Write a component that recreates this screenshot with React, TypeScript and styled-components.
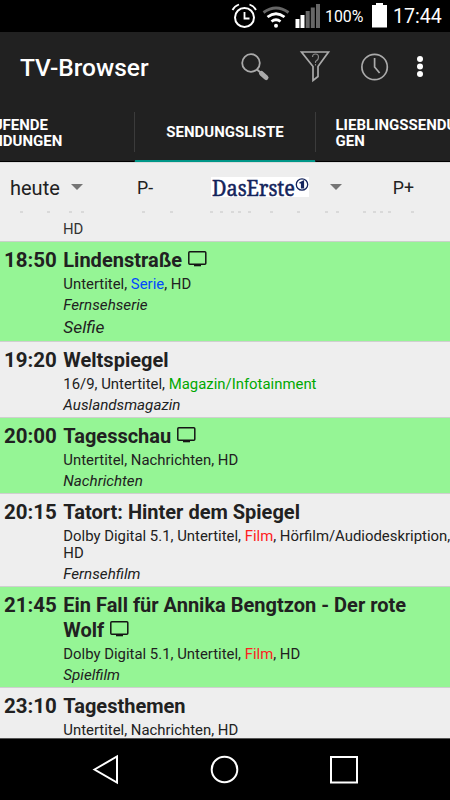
import React from "react";
import styled, { createGlobalStyle } from "styled-components";

const Global = createGlobalStyle`
  * { box-sizing: border-box; }
  body { margin: 0; background: #000; font-family: Roboto, sans-serif; }
`;
const Screen = styled.div`
  width: 450px; height: 800px; overflow: hidden; background: #000;
  display: flex; flex-direction: column;
`;
const Status = styled.header`
  height: 32px; flex: none; display: flex; align-items: center; color: #fff; background: #000;
`;
const StatusIcons = styled.svg`width: 98px; height: 32px; margin-left: 225px; flex: none;`;
const Percent = styled.span`width: 46px; margin-left: 2px; padding-top: 2px; font-size: 15.9px; line-height: 32px; white-space: nowrap;`;
const Battery = styled.svg`width: 18px; height: 32px; flex: none;`;
const Time = styled.span`margin-left: 4px; font-size: 19.6px; line-height: 33px; padding-top: 1px; white-space: nowrap;`;
const AppBar = styled.div`
  height: 73px; flex: none; background: #212121; display: flex; align-items: center; padding: 0 8px 3px 20px;
`;
const AppName = styled.h1`margin: 0; padding-top: 1px; flex: 1; color: #fff; font-size: 24.5px; font-weight: 500; line-height: 30px; white-space: nowrap;`;
const Actions = styled.svg`width: 215px; height: 68px; flex: none; margin-right: -8px;`;
const Tabs = styled.nav`
  height: 57px; flex: none; display: flex; background: #212121; overflow: hidden;
`;
const Tab = styled.div<{ $w: number; $active?: boolean; $align?: string; $pull?: number }>`
  width: ${p => p.$w}px; flex: none; display: flex; align-items: center;
  justify-content: ${p => p.$align ?? "center"};
  padding: 0 0 0 ${p => (p.$pull ?? 0)}px;
  border-bottom: ${p => (p.$active ? "2px solid #009688" : "1px solid #000")};
  color: #fff; font-size: 15px; line-height: 16.5px; font-weight: 700; white-space: pre;
`;
const TabLabel = styled.span<{ $shift?: number }>`margin-left: ${p => p.$shift ?? 0}px;`;
const TabRule = styled.div`width: 1px; height: 40px; margin-top: 7px; flex: none; background: #3b3b3b;`;
const Filter = styled.div`
  height: 49px; flex: none; display: flex; align-items: center; background: #eee; color: #212121;
  border-top: 1px solid #dcdcdc; padding: 1px 36px 0 10px; font-size: 20px;
`;
const Day = styled.span`width: 61px;`;
const Prev = styled.span`margin-left: 54px; width: 74px; font-size: 17.7px;`;
const Next = styled.span`margin-left: auto; font-size: 17.7px;`;
const Caret = styled.span`
  width: 0; height: 0; border: 6px solid transparent; border-top-color: #757575; border-bottom: 0;
  margin-bottom: 2px;
`;
const Logo = styled.svg`width: 98px; height: 20px; margin: 0 21px 2px 0; flex: none; overflow: visible;`;
const List = styled.main`flex: 1; min-height: 0; overflow: hidden; background: #eee;`;
const Clipped = styled.div`height: 31px; border-bottom: 1px solid #c8d2c8; overflow: hidden;`;
const Remnant = styled.svg`display: block; width: 450px; height: 8px;`;
const ClippedText = styled.div`padding-left: 63px; font-size: 14.9px; line-height: 17px; color: #333; margin-top: 2px;`;
const Row = styled.article<{ $h: number; $on?: boolean }>`
  height: ${p => p.$h}px; display: flex; padding: 6px 0 0 4px; color: #212121;
  background: ${p => (p.$on ? "#95f595" : "#eee")};
  border-bottom: 1px solid #cfcfcf; overflow: hidden;
`;
const Start = styled.time`width: 59.3px; flex: none; font-size: 20.5px; line-height: 25px; font-weight: 700;`;
const Body = styled.div`flex: 1; min-width: 0;`;
const Title = styled.h2`margin: 0; font-size: 20px; line-height: 25px; font-weight: 700; white-space: pre-line;`;
const Meta = styled.div`font-size: 14.9px; line-height: 17px; margin-top: 3px; white-space: pre;`;
const Genre = styled.div`font-size: 15.2px; line-height: 17px; margin-top: 4px; font-style: italic;`;
const Episode = styled.div`font-size: 17.3px; line-height: 20px; margin-top: 3px; font-style: italic;`;
const Tag = styled.span<{ $c: string }>`color: ${p => p.$c};`;
const Tv = styled.svg`width: 19px; height: 16px; margin: 0 0 -3px 5.5px; vertical-align: 3px;`;
const Nav = styled.footer`height: 62px; flex: none; background: #000; border-top: 1px solid #555;`;
const NavIcons = styled.svg`display: block; width: 450px; height: 61px;`;

const TvIcon = () => (
  <Tv viewBox="0 1 19 16"><rect x="0.800" y="1.800" width="17" height="12.500" rx="1" fill="none" stroke="#151515" strokeWidth="1.500" /><path d="M6 14.300h7v2H6z" fill="#151515" /></Tv>
);

type Show = { h: number; on?: boolean; time: string; title: string; tv?: boolean; meta: React.ReactNode; genre?: string; episode?: string };
const film = <Tag $c="#ff2020">Film</Tag>;
const shows: Show[] = [
  { h: 100, on: true, time: "18:50", title: "Lindenstraße", tv: true, meta: <>Untertitel, <Tag $c="#0048ff">Serie</Tag>, HD</>, genre: "Fernsehserie", episode: "Selfie" },
  { h: 76, time: "19:20", title: "Weltspiegel", meta: <>16/9, Untertitel, <Tag $c="#00a800">Magazin/Infotainment</Tag></>, genre: "Auslandsmagazin" },
  { h: 76, on: true, time: "20:00", title: "Tagesschau", tv: true, meta: "Untertitel, Nachrichten, HD", genre: "Nachrichten" },
  { h: 93, time: "20:15", title: "Tatort: Hinter dem Spiegel", meta: <>Dolby Digital 5.1, Untertitel, {film}, Hörfilm/Audiodeskription,{"\n"}HD</>, genre: "Fernsehfilm" },
  { h: 101, on: true, time: "21:45", title: "Ein Fall für Annika Bengtzon - Der rote\nWolf", tv: true, meta: <>Dolby Digital 5.1, Untertitel, {film}, HD</>, genre: "Spielfilm" },
  { h: 76, time: "23:10", title: "Tagesthemen", meta: "Untertitel, Nachrichten, HD" },
];

const remnantMarks = [20, 47, 69, 81, 142, 170, 210, 220, 231, 238, 248, 270, 297, 325, 336, 363, 373, 380, 388, 411];

export default function App() {
  return (
    <>
      <Global />
      <Screen>
        <Status>
          <StatusIcons viewBox="225 0 98 32" fill="none" stroke="#fff">
            <circle cx="244.500" cy="17.500" r="9.500" strokeWidth="2" />
            <path d="M244.500 12v6.500h5M232.500 10q2-4 6.500-5.500M256 10q-2-4-6.500-5.500" strokeWidth="1.800" />
            <g strokeWidth="2.800">
              <path d="M263.500 12.500q12.500-9 25 0" stroke="#666" />
              <path d="M267.500 17q8.500-6.500 17 0M271.500 21.500q4.500-3.500 9 0" />
            </g>
            <circle cx="276" cy="25.700" r="2" fill="#fff" stroke="none" />
            <g stroke="none"><path d="M295.500 19h4v9h-4zM300.500 15h4v13h-4z" fill="#fff" /><path d="M305.700 11h4v17h-4zM310.800 7.500h4V28h-4zM316 4h4v24h-4z" fill="#666" /></g>
          </StatusIcons>
          <Percent>100%</Percent>
          <Battery viewBox="0 0 18 32"><path d="M5 3h7v2h4v22.500H1V5h4z" fill="#fff" /></Battery>
          <Time>17:44</Time>
        </Status>
        <AppBar>
          <AppName>TV-Browser</AppName>
          <Actions viewBox="235 33 215 68" fill="none" stroke="#aaa">
            <circle cx="251" cy="63" r="8.800" strokeWidth="1.800" />
            <path d="M257 69.500l4 3.500" strokeWidth="2" /><path d="M261.500 73.500l4.500 4" strokeWidth="5" strokeLinecap="round" />
            <path d="M301.500 52h27l-10.500 14.500v10l-5 4V66.500z" strokeWidth="1.700" />
            <path d="M312.500 57q0-3 3-3t3 3-3 4.500v1.500M315.500 64v1.500" stroke="#888" strokeWidth="1.100" />
            <circle cx="374.600" cy="67" r="12.700" strokeWidth="1.700" /><path d="M374.600 58v9l5 6" strokeWidth="1.700" />
            <g fill="#fff" stroke="none"><circle cx="420" cy="59" r="3" /><circle cx="420" cy="66.500" r="3" /><circle cx="420" cy="74" r="3" /></g>
          </Actions>
        </AppBar>
        <Tabs>
          <Tab $w={134} $align="flex-start"><TabLabel $shift={-25.5}>{"LAUFENDE\nSENDUNGEN"}</TabLabel></Tab>
          <TabRule />
          <Tab $w={180} $active>SENDUNGSLISTE</Tab>
          <TabRule />
          <Tab $w={180} $align="flex-start" $pull={19.5}>{"LIEBLINGSSENDUN\nGEN"}</Tab>
        </Tabs>
        <Filter>
          <Day>heute</Day><Caret />
          <Prev>P-</Prev>
          <Logo viewBox="211 176 98 20">
            <rect x="211" y="176" width="98" height="20" fill="#fff" />
            <text x="212" y="194.500" fontFamily="Noto Serif, Liberation Serif, serif" fontSize="21" stroke="#14245c" strokeWidth=".5" fill="#14245c" textLength="83" lengthAdjust="spacingAndGlyphs">DasErste</text>
            <circle cx="302" cy="183.500" r="5.700" fill="none" stroke="#14245c" strokeWidth="1.300" />
            <path d="M299.500 182l4-2v7h-2v-5z" fill="#14245c" stroke="#14245c" strokeWidth="1.200" />
          </Logo>
          <Caret />
          <Next>P+</Next>
        </Filter>
        <List>
          <Clipped>
            <Remnant viewBox="0 211 450 8">{remnantMarks.map(x => <path key={x} d={`M${x} 212h3`} stroke="#c4c4c4" />)}</Remnant>
            <ClippedText>HD</ClippedText>
          </Clipped>
          {shows.map(s => (
            <Row key={s.time} $h={s.h} $on={s.on}>
              <Start>{s.time}</Start>
              <Body>
                <Title>{s.title}{s.tv && <TvIcon />}</Title>
                <Meta>{s.meta}</Meta>
                {s.genre && <Genre>{s.genre}</Genre>}
                {s.episode && <Episode>{s.episode}</Episode>}
              </Body>
            </Row>
          ))}
        </List>
        <Nav>
          <NavIcons viewBox="0 739 450 61" fill="none" stroke="#fff" strokeWidth="2">
            <path d="M94.500 769.500l22.500-13v26z" /><circle cx="224.500" cy="769.500" r="12.800" /><rect x="331" y="757" width="26" height="25.500" />
          </NavIcons>
        </Nav>
      </Screen>
    </>
  );
}
